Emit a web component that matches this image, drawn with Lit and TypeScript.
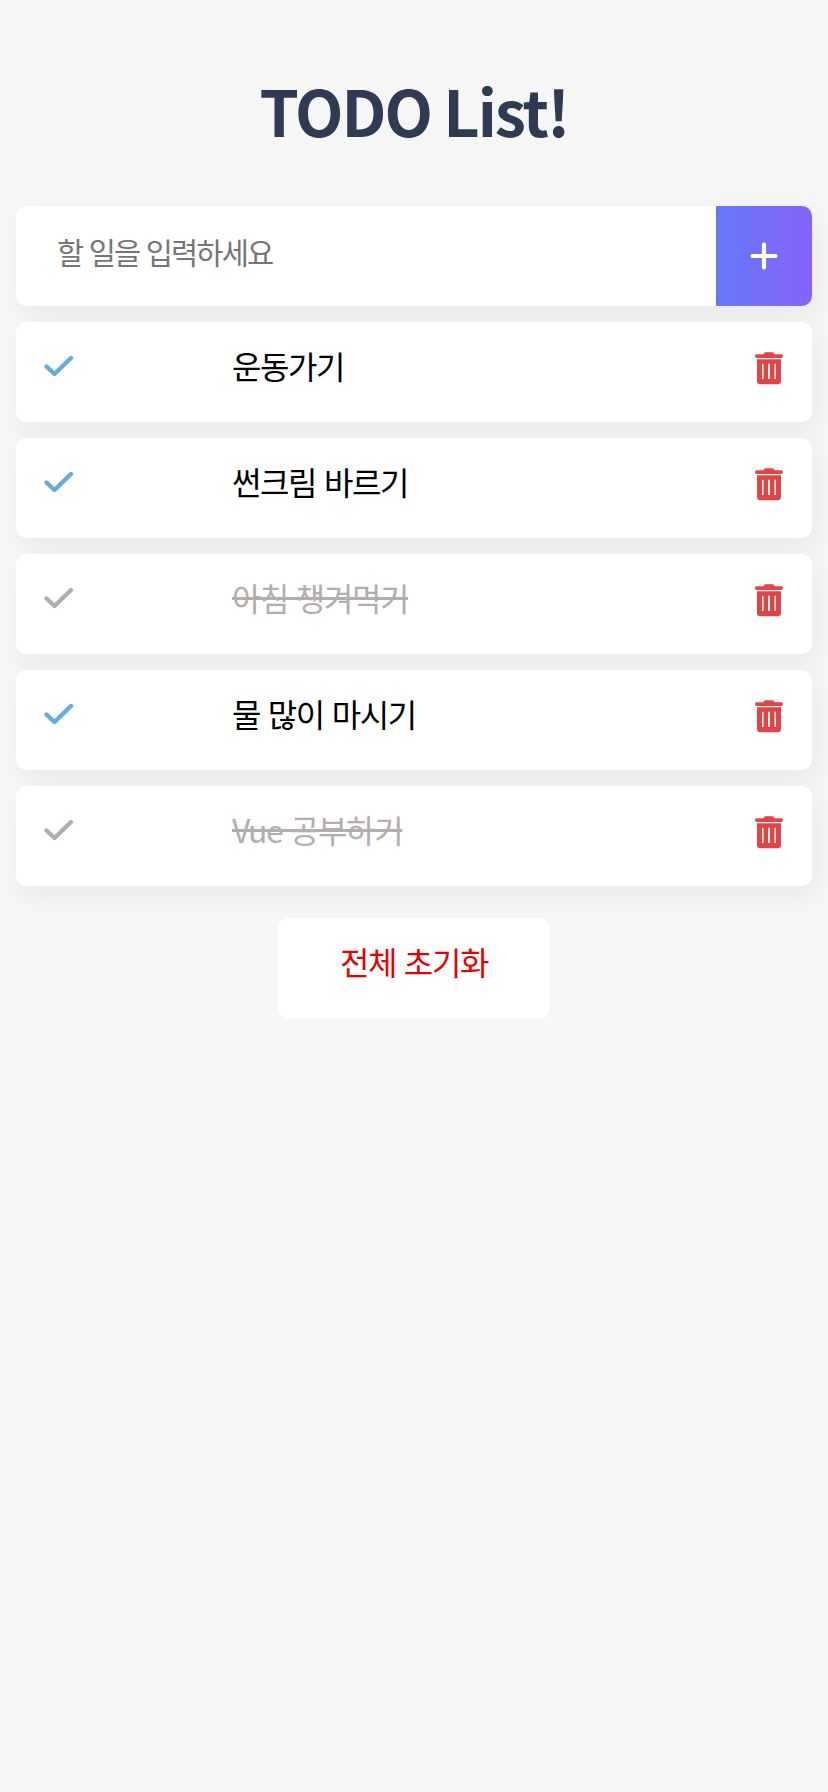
import { LitElement, html, css, svg } from "lit";
import { customElement } from "lit/decorators.js";

const items = [
  { t: "운동가기", done: false },
  { t: "썬크림 바르기", done: false },
  { t: "아침 챙겨먹기", done: true },
  { t: "물 많이 마시기", done: false },
  { t: "Vue 공부하기", done: true },
];

const check = svg`<polyline points="2.500,11.500 10.500,19 27,3" fill="none" stroke="currentColor" stroke-width="4.400" stroke-linecap="round" stroke-linejoin="round"/>`;
const trash = svg`<path fill="#e04444" fill-rule="evenodd" d="M8.500 2.300C9 .8 10 .3 11 .3h6c1 0 2 .5 2.500 2h6.700c1 0 1.800.7 1.800 1.800s-.8 1.900-1.800 1.900H1.800C.8 6 0 5.200 0 4.100s.8-1.800 1.800-1.800zM2 7.300h24v22c0 1.800-1.300 3-3 3H5c-1.700 0-3-1.200-3-3zM7 11.700v15.300h1.500v-15.300zM13 11.700v15.300h1.800v-15.300zM19.500 11.700v15.300h1.500v-15.300z"/>`;

@customElement("app-root")
export class AppRoot extends LitElement {
  static styles = css`
    :host {
      display: block;
      min-height: 1792px;
      background: #f6f6f6;
      font-family: "Noto Sans CJK KR", "Noto Sans", sans-serif;
      box-sizing: border-box;
      padding: 0 16px;
    }
    h1 {
      margin: 0;
      padding-top: 70px;
      height: 206px;
      box-sizing: border-box;
      text-align: center;
      color: #2f3b52;
      font-size: 63px;
      font-weight: 700;
      line-height: 80px;
      letter-spacing: -2px;
    }
    .card {
      height: 100px;
      background: #fff;
      border-radius: 10px;
      box-shadow: 5px 10px 26px rgba(0, 0, 0, 0.055);
      display: flex;
    }
    .input {
      overflow: hidden;
    }
    .ph {
      flex: 1;
      padding: 23px 0 0 41px;
      font-size: 29.500px;
      line-height: 44px;
      color: #757575;
      letter-spacing: -1.800px;
      word-spacing: 1.500px;
    }
    .add {
      width: 96px;
      background: linear-gradient(to right, #6478fb, #8763fb);
      display: flex;
      align-items: center;
      justify-content: center;
    }
    .add svg {
      display: block;
    }
    ul {
      list-style: none;
      margin: 16px 0 0;
      padding: 0;
      display: flex;
      flex-direction: column;
      gap: 16px;
    }
    .row {
      position: relative;
      padding: 22px 29px 0 28px;
      box-sizing: border-box;
      align-items: flex-start;
    }
    .chk {
      width: 188px;
      flex: none;
      color: #62acde;
      padding-top: 11px;
    }
    .chk svg,
    .del {
      display: block;
    }
    .row.done .chk {
      color: #b3adad;
    }
    .txt {
      flex: 1;
      margin-top: -1px;
      font-size: 32px;
      line-height: 44px;
      color: #000;
      letter-spacing: -1.400px;
      word-spacing: 2px;
    }
    .row.done .txt {
      color: #b3adad;
      text-decoration: line-through;
    }
    .del {
      margin-top: 8px;
      flex: none;
    }
    .foot {
      display: flex;
      justify-content: center;
      margin-top: 32px;
    }
    .clear {
      width: 272px;
      height: 100px;
      box-sizing: border-box;
      padding-top: 21px;
      background: #fff;
      border-radius: 10px;
      text-align: center;
      color: #e20303;
      font-size: 32px;
      line-height: 44px;
      letter-spacing: -1.400px;
      word-spacing: 2px;
    }
  `;

  render() {
    return html`
      <h1>TODO List!</h1>
      <div class="card input">
        <div class="ph">할 일을 입력하세요</div>
        <div class="add">
          <svg width="28" height="28" viewBox="0 0 28 28"><path d="M14 2.500v23M2.500 14h23" stroke="#fff" stroke-width="4.200" stroke-linecap="round" fill="none"/></svg>
        </div>
      </div>
      <ul>
        ${items.map(
          (i) => html`
            <li class="card row ${i.done ? "done" : ""}">
              <div class="chk"><svg width="30" height="22" viewBox="0 0 30 22">${check}</svg></div>
              <div class="txt">${i.t}</div>
              <svg class="del" width="28" height="33" viewBox="0 0 28 33">${trash}</svg>
            </li>
          `
        )}
      </ul>
      <div class="foot"><div class="clear">전체 초기화</div></div>
    `;
  }
}
